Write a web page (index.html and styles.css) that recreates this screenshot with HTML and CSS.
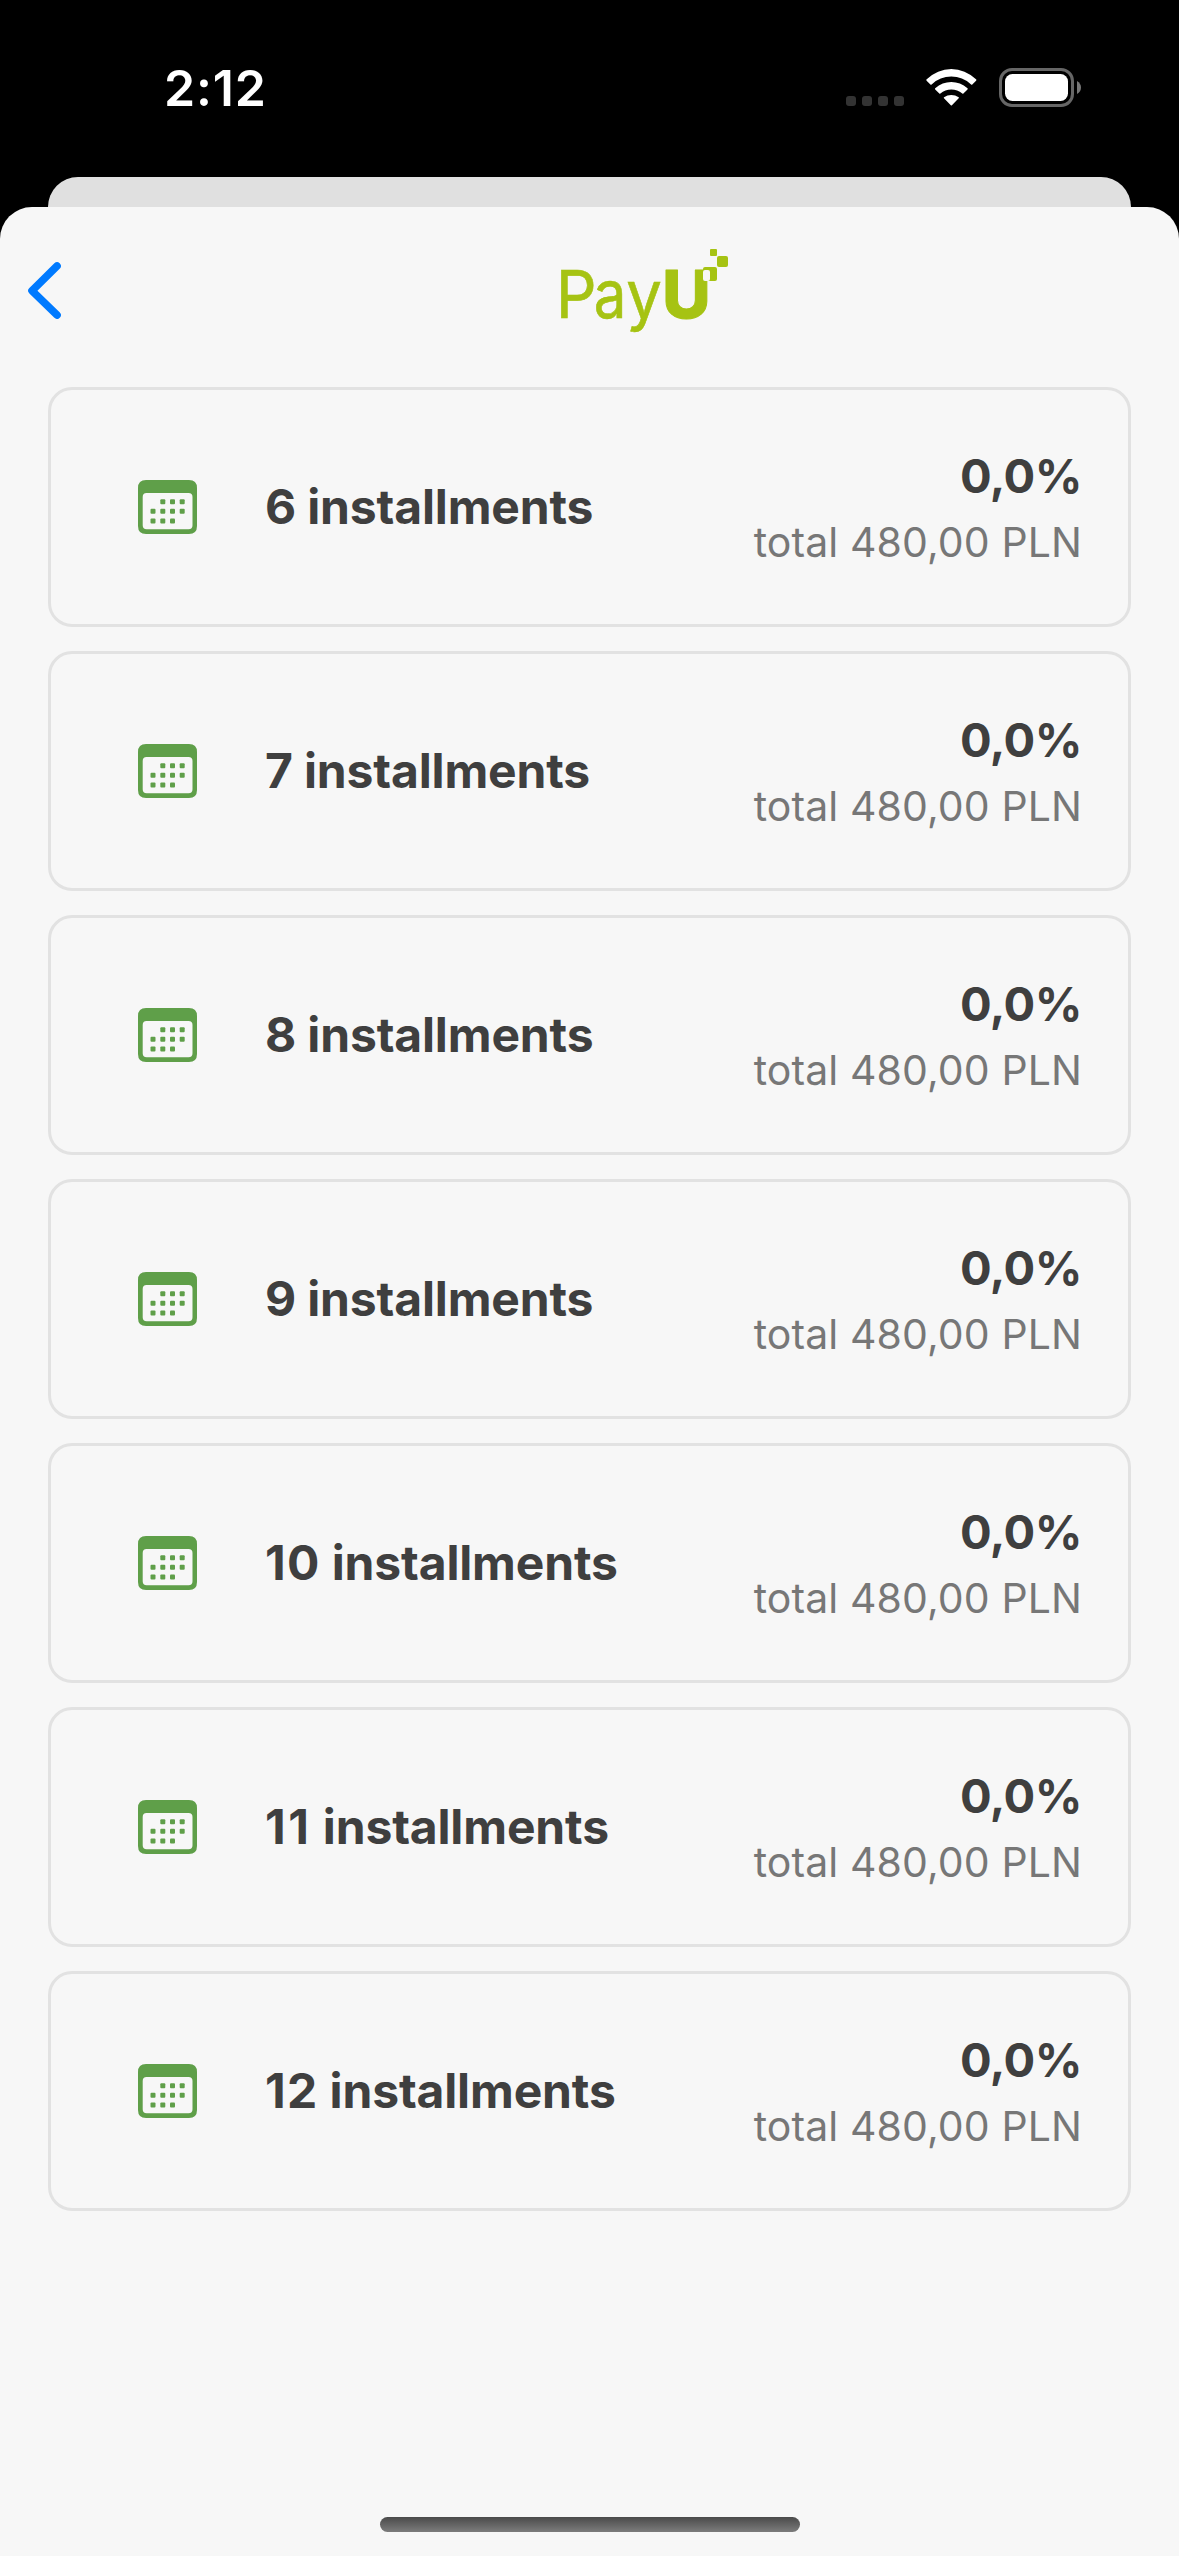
FILE: index.html
```
<!DOCTYPE html>
<html lang="en">
<head>
<meta charset="utf-8">
<title>PayU installments</title>
<link rel="stylesheet" href="styles.css">
</head>
<body>
<svg class="defs" width="0" height="0" aria-hidden="true">
  <symbol id="calendar" viewBox="0 0 59 54">
    <path fill="#5f9f49" fill-rule="evenodd" d="M8 0H51Q59 0 59 8V46Q59 54 51 54H8Q0 54 0 46V8Q0 0 8 0ZM8.500 13Q4.700 13 4.700 17V45.300Q4.700 49.300 8.700 49.300H50.500Q54.500 49.300 54.500 45.300V17Q54.500 13 50.500 13Z"/>
    <g fill="#5f9f49">
      <rect x="22.300" y="19.200" width="5" height="5" rx="1"/><rect x="32" y="19.200" width="5" height="5" rx="1"/><rect x="41.700" y="19.200" width="5" height="5" rx="1"/>
      <rect x="12.500" y="28.800" width="5" height="5" rx="1"/><rect x="22.300" y="28.800" width="5" height="5" rx="1"/><rect x="32" y="28.800" width="5" height="5" rx="1"/><rect x="41.700" y="28.800" width="5" height="5" rx="1"/>
      <rect x="12.500" y="38.500" width="5" height="5" rx="1"/><rect x="22.300" y="38.500" width="5" height="5" rx="1"/><rect x="32" y="38.500" width="5" height="5" rx="1"/>
    </g>
  </symbol>
</svg>
<div class="screen">
  <header class="status">
    <span class="time">2:12</span>
    <div class="indicators">
      <svg class="signal" viewBox="0 0 58 10" fill="#333"><rect width="10" height="10" rx="3"/><rect x="16" width="10" height="10" rx="3"/><rect x="32" width="10" height="10" rx="3"/><rect x="48" width="10" height="10" rx="3"/></svg>
      <svg class="wifi" viewBox="0 0 51 37" fill="#fff"><path d="M0.400 10.600Q11.500 0 25.300 0T50.300 10.600Q50.600 11.200 50.100 11.700L46.300 15.500Q45.700 16 45.100 15.400Q36.500 7.600 25.300 7.600T5.600 15.400Q5 16 4.400 15.500L0.600 11.700Q0.100 11.200 0.400 10.600Z"/><path d="M9.200 19.300Q16.300 13 25.300 13T41.500 19.300Q42 19.900 41.500 20.400L37.400 24.500Q36.900 25 36.300 24.400Q31.500 20.500 25.300 20.500T14.400 24.400Q13.800 25 13.300 24.500L9.200 20.400Q8.700 19.900 9.200 19.300Z"/><path d="M18 28.200Q21.300 25.900 25.300 25.900T32.700 28.200Q33.200 28.700 32.700 29.200L25.900 36.200Q25.300 36.800 24.800 36.200L18 29.200Q17.500 28.700 18 28.200Z"/></svg>
      <svg class="battery" viewBox="0 0 83 39"><rect x="1.500" y="1.500" width="72" height="36" rx="11.500" fill="none" stroke="#666" stroke-width="3"/><rect x="6" y="6" width="63" height="27" rx="7.500" fill="#fff"/><path d="M78 13Q82 15.500 82 19.500T78 26Z" fill="#777"/></svg>
    </div>
  </header>
  <div class="sheet-behind"></div>
  <main class="sheet">
    <nav class="bar">
      <svg class="back" viewBox="0 0 34 58" fill="none" stroke="#007aff" stroke-width="7.600" stroke-linecap="round" stroke-linejoin="round"><path d="M30 5L5 29.700L30 54"/></svg>
      <svg class="logo" viewBox="0 0 170 98" fill="#a6c313" role="img" aria-label="PayU">
        <g class="thin">
          <text transform="translate(-4.200 73) scale(.97 1)">P</text>
          <text transform="translate(33.800 73) scale(.88 1.010)">a</text>
          <text transform="translate(66.200 73) scale(.96 1)">y</text>
        </g>
        <text class="thick" transform="translate(102.200 73)">U</text>
        <rect x="150" y="4" width="7" height="7" rx="1"/>
        <rect x="157" y="11" width="11" height="11" rx="2"/>
        <rect x="143" y="22" width="14" height="14" rx="2"/>
        <rect x="143" y="25" width="7" height="11" rx="2" fill="#f7f7f7"/>
      </svg>
    </nav>
    <section class="list">
      <article class="card"><svg class="cal"><use href="#calendar"/></svg><h2 class="name">6 installments</h2><div class="cost"><span class="rate">0,0%</span><span class="total">total 480,00 PLN</span></div></article>
      <article class="card"><svg class="cal"><use href="#calendar"/></svg><h2 class="name">7 installments</h2><div class="cost"><span class="rate">0,0%</span><span class="total">total 480,00 PLN</span></div></article>
      <article class="card"><svg class="cal"><use href="#calendar"/></svg><h2 class="name">8 installments</h2><div class="cost"><span class="rate">0,0%</span><span class="total">total 480,00 PLN</span></div></article>
      <article class="card"><svg class="cal"><use href="#calendar"/></svg><h2 class="name">9 installments</h2><div class="cost"><span class="rate">0,0%</span><span class="total">total 480,00 PLN</span></div></article>
      <article class="card"><svg class="cal"><use href="#calendar"/></svg><h2 class="name"><span class="digits">10</span> installments</h2><div class="cost"><span class="rate">0,0%</span><span class="total">total 480,00 PLN</span></div></article>
      <article class="card"><svg class="cal"><use href="#calendar"/></svg><h2 class="name"><span class="digits narrow">11</span> installments</h2><div class="cost"><span class="rate">0,0%</span><span class="total">total 480,00 PLN</span></div></article>
      <article class="card"><svg class="cal"><use href="#calendar"/></svg><h2 class="name"><span class="digits">12</span> installments</h2><div class="cost"><span class="rate">0,0%</span><span class="total">total 480,00 PLN</span></div></article>
    </section>
    <div class="home"></div>
  </main>
</div>
</body>
</html>
```
FILE: styles.css
```
* { box-sizing: border-box; }
body { margin: 0; background: #000; font-family: Inter, "Liberation Sans", sans-serif; }
svg { display: block; flex: none; }
.defs { position: absolute; }
.screen { width: 1179px; height: 2556px; display: flex; flex-direction: column; overflow: hidden; background: #000; }
.status { height: 177px; flex: none; display: flex; justify-content: space-between; align-items: flex-start; padding: 58px 97px 0 164px; color: #fff; }
.time { font-size: 50px; line-height: 60px; font-weight: 600; letter-spacing: 0.8px; }
.indicators { display: flex; align-items: flex-end; padding-top: 10px; }
.signal { width: 58px; height: 10px; margin: 0 22px 1px 0; }
.wifi { width: 51px; height: 37px; margin: 0 22px 1px 0; }
.battery { width: 83px; height: 39px; }
.sheet-behind { height: 30px; flex: none; margin: 0 48px; background: #e0e0e0; border-radius: 30px 30px 0 0; }
.sheet { flex: 1; display: flex; flex-direction: column; background: #f7f7f7; border-radius: 32px 32px 0 0; }
.bar { height: 180px; flex: none; display: flex; align-items: flex-start; padding-top: 38px; }
.back { width: 34px; height: 58px; margin: 16px 0 0 27px; }
.logo { width: 170px; height: 98px; margin-left: 499px; overflow: visible; }
.thin { font-size: 66px; font-weight: 400; stroke: #a6c313; stroke-width: 0.6px; }
.thick { font-size: 66.500px; font-weight: 800; stroke: #a6c313; stroke-width: 1px; stroke-linejoin: round; }
.list { display: flex; flex-direction: column; gap: 24px; padding: 0 48px; }
.card { height: 240px; display: flex; align-items: center; border: 3px solid #e2e2e2; border-radius: 24px; padding: 0 46px 0 87px; }
.cal { width: 59px; height: 54px; }
.name { margin: 0 0 0 68px; font-size: 48px; line-height: 60px; font-weight: 700; color: #3f3f3f; white-space: nowrap; letter-spacing: -0.15px; }
.digits { letter-spacing: 1.2px; }
.digits.narrow { letter-spacing: 2.6px; }
.cost { margin-left: auto; padding-top: 3px; display: flex; flex-direction: column; align-items: flex-end; white-space: nowrap; }
.rate { font-size: 47px; line-height: 66px; font-weight: 700; color: #3f3f3f; letter-spacing: -0.5px; }
.total { font-size: 41px; line-height: 66px; color: #777; letter-spacing: 0.1px; }
.home { width: 420px; height: 15px; margin: auto auto 24px; border-radius: 8px; background: linear-gradient(#4a4a4a, #7c7c7c); }
```
